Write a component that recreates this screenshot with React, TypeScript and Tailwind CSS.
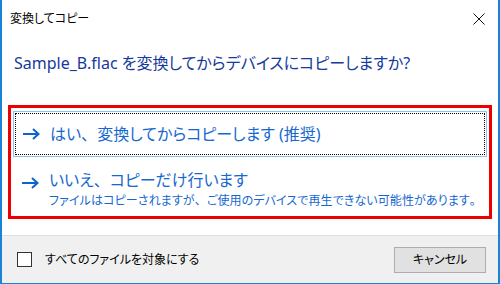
import React from "react";

const FONT = "[font-family:'Noto_Sans','Noto_Sans_CJK_JP',sans-serif] [font-feature-settings:'palt']";
const FW = "[font-feature-settings:normal]";

function Arrow() {
  return (
    <svg width="18" height="12" viewBox="0 0 18 12" className="shrink-0">
      <path d="M1 6 H16 M11 1 L16.5 6 L11 11" stroke="#0c63c9" strokeWidth="2" fill="none" />
    </svg>
  );
}

export default function App() {
  return (
    <div className={`w-[500px] h-[284px] bg-white border-x-2 border-b border-[#1883d7] flex flex-col ${FONT}`}>
      <div className="h-[37px] flex items-center justify-between pl-[8px] pr-[13px]">
        <span className="text-[12px] text-black leading-none">変換してコピー</span>
        <svg width="12" height="12" viewBox="0 0 12 12">
          <path d="M0.5 0.5 L11.5 11.5 M11.5 0.5 L0.5 11.5" stroke="#111" strokeWidth="1" />
        </svg>
      </div>
      <div className="mt-[14px] pl-[12px] text-[16px] leading-[24px] text-[#153a9c]">
        Sample_B.flac を変換してからデバイスにコピーしますか?
      </div>
      <div className="mt-[30px] ml-[6px] w-[484px] h-[114px] border-[3px] border-[#ee0000] pt-[3px] px-[2px] flex flex-col">
        <div className="h-[46px] border border-[#8cc2ef] p-[1px]">
          <div className="h-full border border-dotted border-black flex items-center pl-[6px]">
            <Arrow />
            <span className="ml-[10px] text-[16px] leading-none text-[#1668cf]">
              はい<span className={FW}>、</span>変換してからコピーします (推奨)
            </span>
          </div>
        </div>
        <div className="flex pl-[8px] pt-[11px]">
          <div className="pt-[9px]"><Arrow /></div>
          <div className="ml-[10px] flex flex-col">
            <span className="text-[16px] leading-[24px] text-[#1668cf]">
              いいえ<span className={FW}>、</span>コピーだけ行います
            </span>
            <span className="text-[12px] leading-[16px] mt-[1px] text-[#1668cf] tracking-[0.1px]">
              ファイルはコピーされますが<span className={FW}>、</span>ご使用のデバイスで再生できない可能性があります<span className={FW}>。</span>
            </span>
          </div>
        </div>
      </div>
      <div className="mt-auto h-[48px] bg-[#f0f0f0] border-t border-[#dfdfdf] flex items-center justify-between pl-[15px] pr-[12px]">
        <div className="flex items-center">
          <div className="w-[15px] h-[15px] border border-[#333] bg-white" />
          <span className="ml-[13px] text-[12px] text-black">すべてのファイルを対象にする</span>
        </div>
        <div className="w-[92px] h-[26px] bg-[#e1e1e1] border border-[#adadad] flex items-center justify-center text-[12px] text-black">
          キャンセル
        </div>
      </div>
    </div>
  );
}
